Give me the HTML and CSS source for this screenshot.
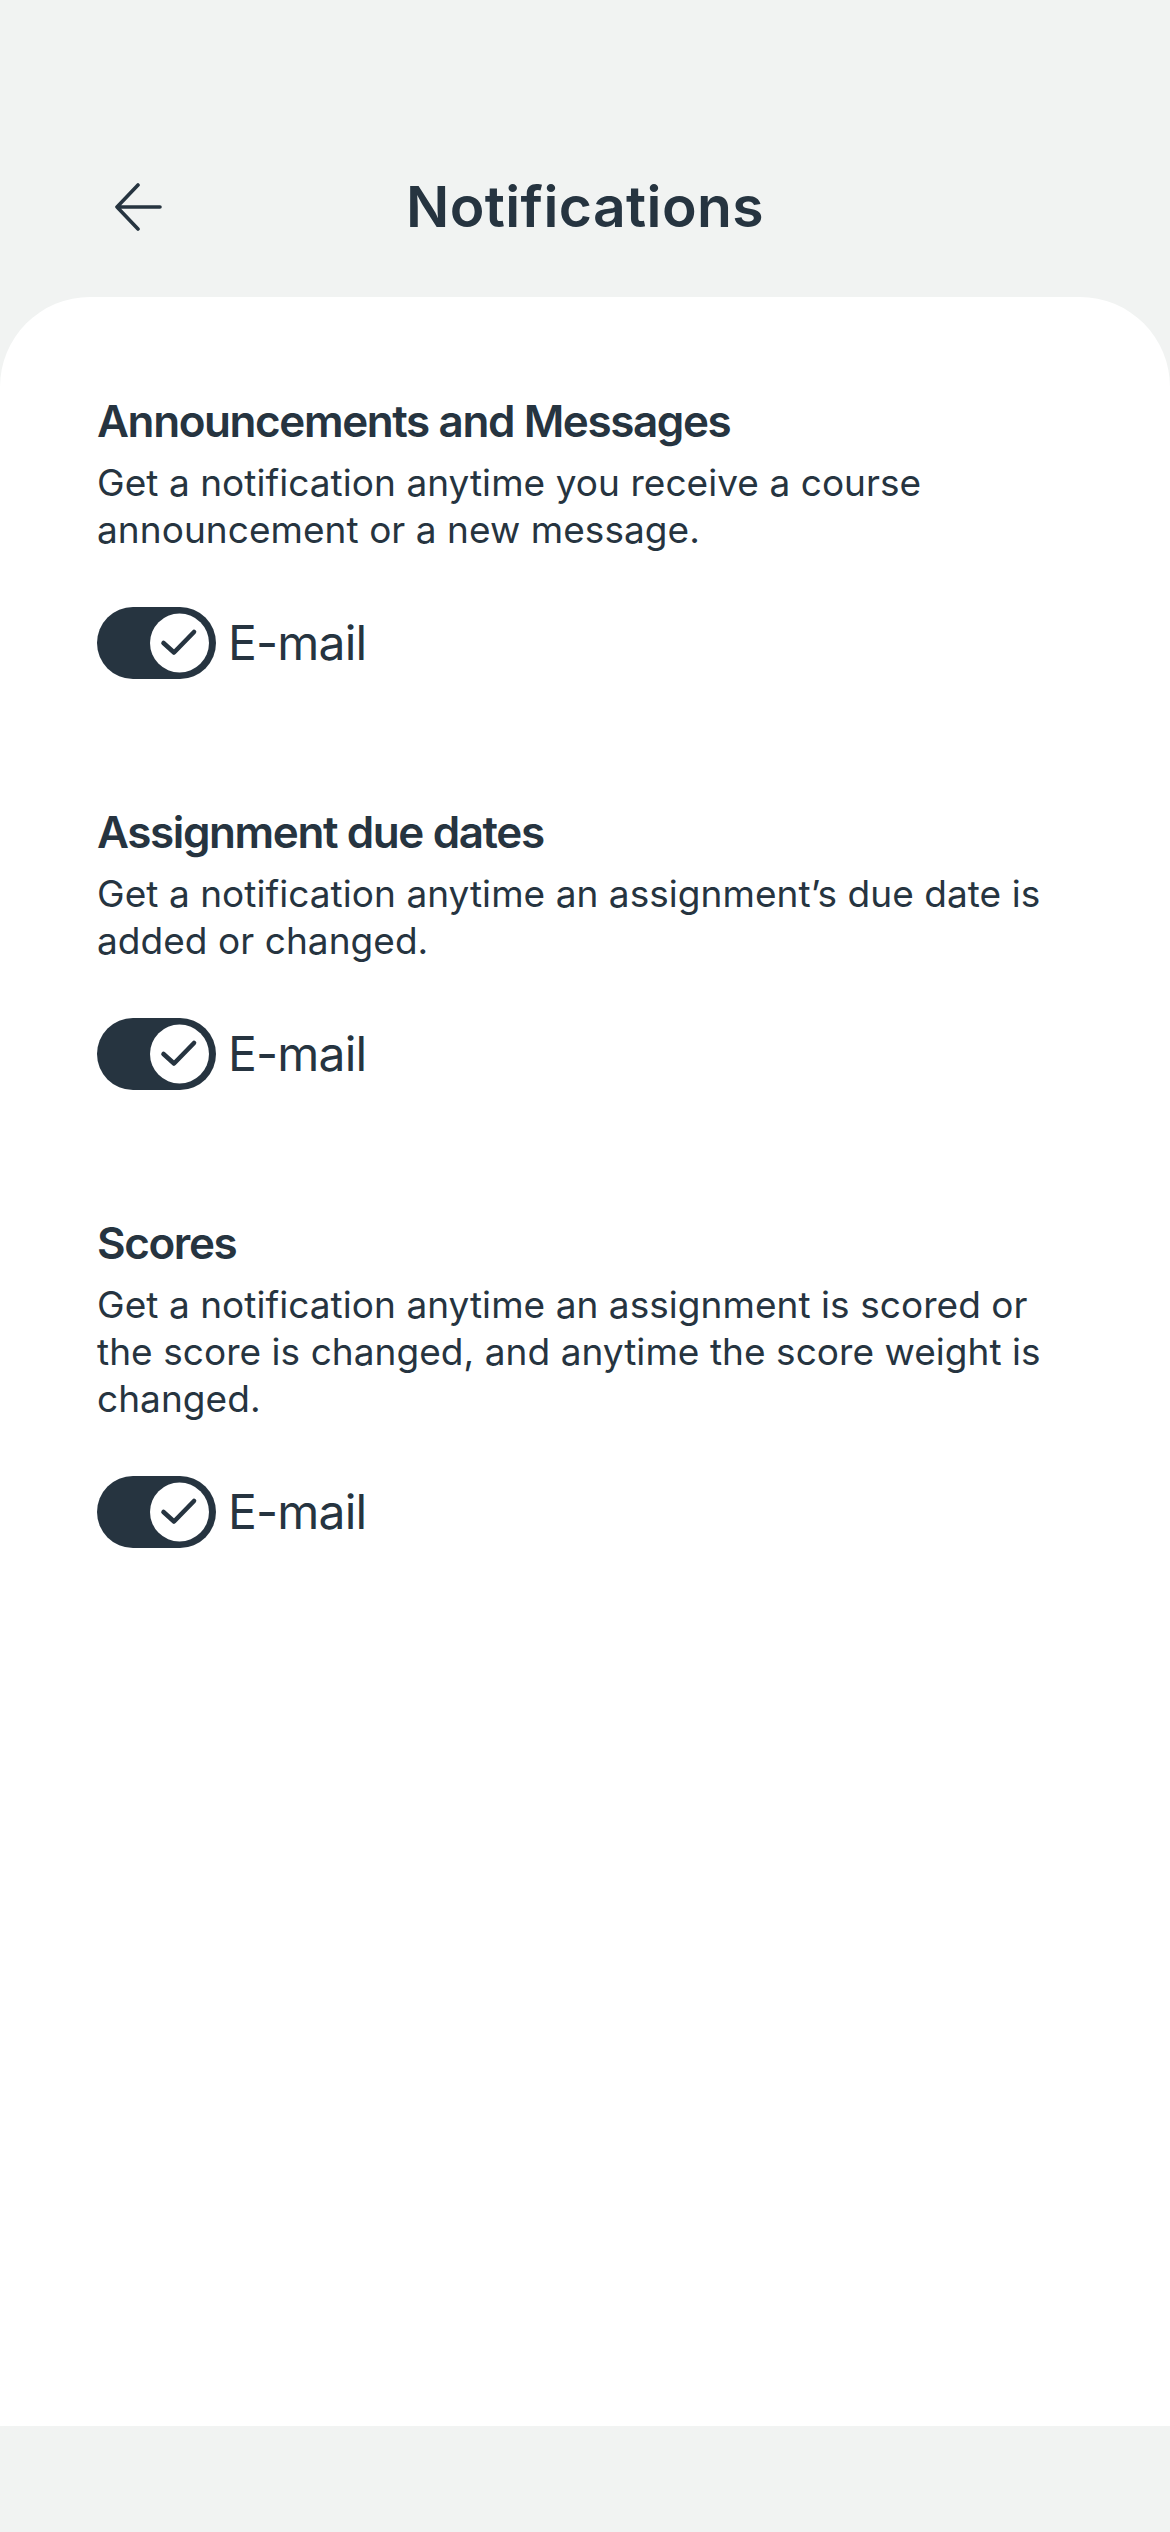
FILE: index.html
```html
<!DOCTYPE html>
<html lang="en">
<head>
<meta charset="utf-8">
<title>Notifications</title>
<link rel="stylesheet" href="styles.css">
</head>
<body>
<div class="screen">
  <header class="topbar">
    <div class="back">
      <svg width="48" height="48" viewBox="0 0 48 48" fill="none" stroke="#263440" stroke-width="3.6" stroke-linecap="round" stroke-linejoin="round"><path d="M3 24H46M24 2L3 24L24 46"/></svg>
    </div>
    <h1 class="title">Notifications</h1>
    <div></div>
  </header>
  <main class="card">
    <section class="group">
      <h2 class="heading">Announcements and Messages</h2>
      <p class="desc">Get a notification anytime you receive a course announcement or a new message.</p>
      <div class="option">
        <svg class="toggle" width="119" height="72" viewBox="0 0 119 72"><rect x="0" y="0" width="119" height="72" rx="36" fill="#263440"/><circle cx="82.5" cy="36" r="29.5" fill="#fff"/><path d="M66.5 36L77 45.5L97 25" fill="none" stroke="#263440" stroke-width="4.6" stroke-linecap="round" stroke-linejoin="round"/></svg>
        <span class="label">E-mail</span>
      </div>
    </section>
    <section class="group">
      <h2 class="heading">Assignment due dates</h2>
      <p class="desc">Get a notification anytime an assignment’s due date is added or changed.</p>
      <div class="option">
        <svg class="toggle" width="119" height="72" viewBox="0 0 119 72"><rect x="0" y="0" width="119" height="72" rx="36" fill="#263440"/><circle cx="82.5" cy="36" r="29.5" fill="#fff"/><path d="M66.5 36L77 45.5L97 25" fill="none" stroke="#263440" stroke-width="4.6" stroke-linecap="round" stroke-linejoin="round"/></svg>
        <span class="label">E-mail</span>
      </div>
    </section>
    <section class="group">
      <h2 class="heading">Scores</h2>
      <p class="desc">Get a notification anytime an assignment is scored or the score is changed, and anytime the score weight is changed.</p>
      <div class="option">
        <svg class="toggle" width="119" height="72" viewBox="0 0 119 72"><rect x="0" y="0" width="119" height="72" rx="36" fill="#263440"/><circle cx="82.5" cy="36" r="29.5" fill="#fff"/><path d="M66.5 36L77 45.5L97 25" fill="none" stroke="#263440" stroke-width="4.6" stroke-linecap="round" stroke-linejoin="round"/></svg>
        <span class="label">E-mail</span>
      </div>
    </section>
  </main>
  <footer class="bottom"></footer>
</div>
</body>
</html>
```
FILE: styles.css
```css
* { box-sizing: border-box; }
html, body {
  margin: 0;
  padding: 0;
  background: #f1f3f2;
}
body {
  font-family: Inter, "Noto Sans", sans-serif;
  color: #263440;
}
.screen {
  width: 1170px;
  height: 2532px;
  display: flex;
  flex-direction: column;
}
.topbar {
  height: 297px;
  padding-top: 147px;
  display: grid;
  grid-template-columns: 1fr auto 1fr;
  align-items: start;
}
.back {
  height: 120px;
  padding-left: 114px;
  display: flex;
  align-items: center;
}
.back svg { display: block; }
.title {
  margin: 0;
  height: 120px;
  line-height: 120px;
  font-size: 57px;
  font-weight: 600;
  letter-spacing: 0.4px;
}
.card {
  flex: 1;
  background: #ffffff;
  border-radius: 90px 90px 0 0;
  padding: 96px 97px 0 97px;
  display: flex;
  flex-direction: column;
}
.group {
  height: 411px;
}
.heading {
  margin: 0;
  font-size: 44px;
  line-height: 56px;
  font-weight: 600;
  letter-spacing: -1.4px;
}
.desc {
  margin: 10px 0 0 0;
  font-size: 37px;
  line-height: 47px;
  font-weight: 400;
  letter-spacing: 0.05px;
}
.option {
  margin-top: 54px;
  display: flex;
  align-items: center;
  gap: 12px;
}
.toggle { display: block; flex: none; }
.label {
  font-size: 48px;
  line-height: 72px;
  font-weight: 400;
  letter-spacing: -0.8px;
}
.bottom {
  height: 106px;
  flex: none;
}
```
